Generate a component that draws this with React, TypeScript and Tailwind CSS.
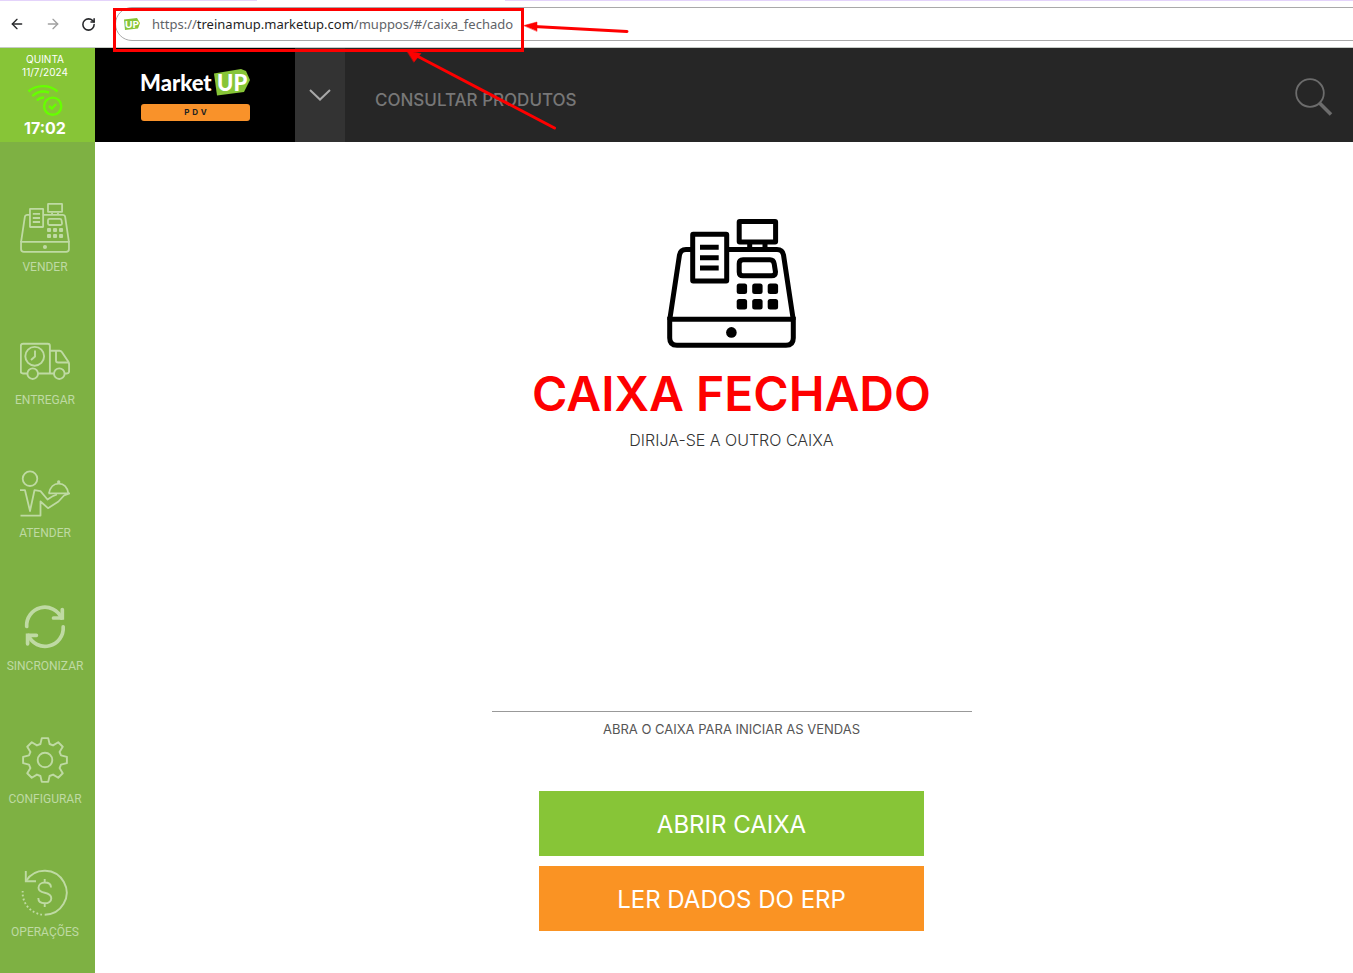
import React from 'react';
import { ArrowLeft, ArrowRight, RotateCw } from 'lucide-react';

interface IconProps {
  className?: string;
  stroke?: number;
}

function RegisterIcon({ className, stroke = 5 }: IconProps) {
  return (
    <svg viewBox="0 0 129 129" className={className} fill="none" stroke="currentColor" strokeWidth={stroke}>
      <path d="M2.7 101 12.5 36Q13.5 30.5 19 30.5H26M61 30.5H110Q115.5 30.5 116.5 36L126.3 101" />
      <path d="M2.7 100.3H126.3V119q0 7.3-7.3 7.3H10q-7.3 0-7.3-7.3Z" />
      <rect x="25.7" y="15.3" width="34" height="46.6" rx="0.5" />
      <path d="M33 28.2H51.7M33 38.7H51.7M33 49H51.7" />
      <rect x="72.2" y="2.5" width="36.4" height="20.4" rx="0.5" />
      <path d="M82.7 25V30M98 25V30" />
      <path d="M76 40.8H103q3.6 0 4.2 4L108.5 53q0 3.8-4 3.8H76q-3.8 0-3.8-3.8V44.8q0-4 3.8-4Z" />
      <g fill="currentColor" stroke="none">
        {[69.7, 85.2, 100.7].map((x) => (
          <React.Fragment key={x}>
            <rect x={x} y="64.5" width="10.4" height="10.4" rx="2.5" />
            <rect x={x} y="80" width="10.4" height="10.4" rx="2.5" />
          </React.Fragment>
        ))}
        <circle cx="64.4" cy="113.4" r="5.3" />
      </g>
    </svg>
  );
}

function TruckIcon({ className }: IconProps) {
  return (
    <svg viewBox="0 0 50 50" className={className} fill="none" stroke="currentColor" strokeWidth="1.9">
      <path d="M7.4 37.5H3q-2.2 0-2.2-2.2V10q0-2.2 2.2-2.2H27.7q2.2 0 2.2 2.2V37.5M18 37.5H34M30 14.8H39.5Q41 14.8 42 16.3L48.2 25.5Q49.1 27 49.1 28.5V35.3q0 2.2-2.2 2.2H44.6" />
      <path d="M36 15V24.5q0 2 2 2H49" />
      <circle cx="12.7" cy="37.7" r="5.3" />
      <circle cx="39.3" cy="37.7" r="5.3" />
      <circle cx="14.7" cy="20.3" r="9.4" />
      <path d="M15 14.5V20.5L11 24" />
    </svg>
  );
}

function WaiterIcon({ className }: IconProps) {
  return (
    <svg viewBox="0 0 50 50" className={className} fill="none" stroke="currentColor" strokeWidth="1.8" strokeLinejoin="round">
      <circle cx="10" cy="9.7" r="7.3" />
      <path d="M0 21.2H5L10 42 14.5 21.2 20.5 22.2 27.5 30.5Q33 26.5 37 25.5" />
      <path d="M0.5 46.6H20.5V32.5L28 39.2 38.5 32.5 44 26.5 49.5 24.4H28.5" />
      <path d="M29 24.4C30 18 34 14.6 38.7 14.6S47.3 18 48.3 24.4" />
      <circle cx="38.7" cy="13" r="0.8" />
    </svg>
  );
}

function SyncIcon({ className }: IconProps) {
  return (
    <svg viewBox="0 0 50 50" className={className} fill="none" stroke="currentColor" strokeWidth="3.7" strokeLinecap="round">
      <path d="M6.7 24.5A18.2 18.2 0 0 1 41.5 16M43.2 24.9A18.2 18.2 0 0 1 8.4 33.5" />
      <path d="M42.3 7.5V16H33.5M7.6 41.8V33.3H16.4" />
    </svg>
  );
}

// one tooth, repeated every 45 degrees
const tooth = [[-4.6, -16], [-3.2, -21.9], [3.2, -21.9], [4.6, -16]];
const gearPoints = Array.from({ length: 8 }, (_, i) => {
  const a = (i * Math.PI) / 4;
  return tooth
    .map(([x, y]) => `${25 + x * Math.cos(a) - y * Math.sin(a)},${25 + x * Math.sin(a) + y * Math.cos(a)}`)
    .join(' ');
}).join(' ');

function GearIcon({ className }: IconProps) {
  return (
    <svg viewBox="0 0 50 50" className={className} fill="none" stroke="currentColor" strokeWidth="1.9" strokeLinejoin="round">
      <polygon points={gearPoints} />
      <circle cx="25" cy="25" r="7.3" />
    </svg>
  );
}

function MoneyBackIcon({ className }: IconProps) {
  return (
    <svg viewBox="0 0 50 50" className={className} fill="none" stroke="currentColor" strokeWidth="1.9">
      <path d="M6 13A22 22 0 1 1 24.7 46.7" />
      <path d="M22 46.6A22 22 0 0 1 2.7 23" strokeDasharray="1.8 2.2" />
      <path d="M5.8 3V13.2H16" />
      <path d="M31 19.5C31 16 28 14.5 24.7 14.5S18.5 16.5 18.5 19.7C18.5 23 21 24 24.7 24.8S31.3 27 31.3 30.2 28.5 35.3 24.7 35.3 18.3 33.3 18.3 30M24.7 11V14.5M24.7 35.3V39" />
    </svg>
  );
}

function WifiIcon() {
  return (
    <svg viewBox="0 0 36 34" className="h-[34px] w-9" fill="none" stroke="#66ff00" strokeWidth="2.4">
      <path d="M1.5 8.5C9 1.5 22.5 1.2 30.5 8.5M5.3 13.2C10 8.7 16 7.5 22 9.5M9.8 17.5C11.5 15.5 14 14.5 17 14.5" />
      <circle cx="25.7" cy="23.2" r="8.6" />
      <path d="M22 23 24.8 25.5 29.2 21" />
    </svg>
  );
}

function Logo() {
  return (
    <svg viewBox="0 0 110 30" className="h-[30px] w-[110px]" role="img" aria-label="MarketUP">
      <path d="M74 5.5 101 1 106 3 110 12 104 24 77 27.5Z" fill="#87c537" />
      <g fill="#fff" fontFamily="Lato, sans-serif" fontWeight="900" fontSize="22">
        <text x="0" y="23">Market</text>
        <text x="77" y="23">UP</text>
      </g>
    </svg>
  );
}

const menu = [
  { label: 'VENDER', icon: <RegisterIcon className="size-[50px]" stroke={4.6} /> },
  { label: 'ENTREGAR', icon: <TruckIcon className="size-[50px]" /> },
  { label: 'ATENDER', icon: <WaiterIcon className="size-[50px]" /> },
  { label: 'SINCRONIZAR', icon: <SyncIcon className="size-[50px]" /> },
  { label: 'CONFIGURAR', icon: <GearIcon className="size-[50px]" /> },
  { label: 'OPERAÇÕES', icon: <MoneyBackIcon className="size-[50px]" /> },
];

function BrowserBar() {
  return (
    <div className="flex h-12 flex-col border-b border-[#c6cbc6] bg-white">
      <div className="flex h-px">
        <span className="w-[257px] bg-[#e4d3fb]" />
        <span className="w-[248px]" />
        <span className="flex-1 bg-[#e4d3fb]" />
      </div>
      <div className="flex flex-1 items-center overflow-hidden">
        <div className="flex w-[115px] shrink-0 items-center gap-5 pl-[9px] text-[#27282b]">
          <button type="button" aria-label="Voltar"><ArrowLeft size={16} /></button>
          <button type="button" aria-label="Avançar" className="text-[#a0a0a0]"><ArrowRight size={16} /></button>
          <button type="button" aria-label="Recarregar"><RotateCw size={15} strokeWidth={2.5} /></button>
        </div>
        <div className="-mr-5 flex h-[34px] flex-1 items-center gap-3 rounded-full border border-[#a9a9a9] pl-2">
          <svg viewBox="0 0 16 12" className="h-3 w-4" aria-hidden="true">
            <path d="M0 1.5 13 0 16 5 14 10.5 1 12Z" fill="#87c537" />
            <text x="1" y="10" fill="#fff" fontFamily="Lato, sans-serif" fontWeight="900" fontSize="10">UP</text>
          </svg>
          <div role="textbox" aria-label="Endereço" className="pt-0.5 font-['Noto_Sans',sans-serif] text-[13px] text-[#5f6368]">
            https://<span className="text-[#1f1f1f]">treinamup.marketup.com</span>/muppos/#/caixa_fechado
          </div>
        </div>
      </div>
    </div>
  );
}

function Annotations() {
  return (
    <div className="pointer-events-none absolute inset-x-0 top-0" aria-hidden="true">
      <div className="absolute top-2 left-[113px] h-11 w-[411px] border-3 border-[#fe0000]" />
      <svg viewBox="0 0 260 120" className="absolute top-4 left-[400px] h-[120px] w-[260px]" fill="#fe0000" stroke="#fe0000" strokeWidth="3" strokeLinecap="round">
        <path d="M134 10.5 227 15.5M18 40.5 154.5 112" />
        <path d="M124 9.5 137 6V15ZM7 35 21 37.5 14 46Z" strokeWidth="0.5" />
      </svg>
    </div>
  );
}

export default function App() {
  return (
    <div className="relative flex min-h-screen flex-col bg-white font-[Inter,sans-serif]">
      <BrowserBar />

      <div className="flex flex-1">
        <aside className="flex w-[95px] shrink-0 flex-col bg-[#7eb143]">
          <div className="flex h-[94px] flex-col items-center bg-[#87c537] pt-[5px] pr-[5px] text-white">
            <span className="text-[10px] leading-[13px]">QUINTA</span>
            <span className="text-[10px] leading-[13px]">11/7/2024</span>
            <div className="mt-1"><WifiIcon /></div>
            <span className="text-base leading-[22px] font-bold">17:02</span>
          </div>
          <nav className="flex flex-1 flex-col pt-[30px] pr-[5px] pb-0.5">
            {menu.map((item) => (
              <button
                key={item.label}
                type="button"
                className="flex flex-1 flex-col items-center justify-center gap-1.5 text-[#bfdaa3]"
              >
                {item.icon}
                <span className="font-[Roboto,sans-serif] text-xs">{item.label}</span>
              </button>
            ))}
          </nav>
        </aside>

        <div className="flex flex-1 flex-col">
          <header className="flex h-[94px] bg-[#262626]">
            <div className="flex w-[200px] flex-col items-center gap-1.5 bg-black pt-5">
              <Logo />
              <span className="w-[109px] rounded-[3px] bg-[#f9922a] pl-1 text-center text-[8px] leading-[17px] font-bold tracking-[3px] text-[#222222]">
                PDV
              </span>
            </div>
            <button type="button" aria-label="Mais opções" className="flex w-[50px] items-center justify-center bg-[#333333]">
              <svg viewBox="0 0 22 12" className="h-3 w-[22px]" fill="none" stroke="#a8a8a8" strokeWidth="2">
                <path d="M1 1 11 10.5 21 1" />
              </svg>
            </button>
            <input
              type="text"
              aria-label="Consultar produtos"
              placeholder="CONSULTAR PRODUTOS"
              className="min-w-0 flex-1 bg-transparent pt-3 pl-[30px] text-[17px] font-medium text-white outline-none placeholder:text-[#777777]"
            />
            <button type="button" aria-label="Buscar" className="px-5 pt-1">
              <svg viewBox="0 0 38 38" className="size-[38px]" fill="none" stroke="#6c6c6c">
                <circle cx="15" cy="15" r="13.8" strokeWidth="1.8" />
                <path d="M24.5 25 36 36.5" strokeWidth="3.5" />
              </svg>
            </button>
          </header>

          <main className="flex flex-1 flex-col items-center justify-between gap-10 pt-[77px] pb-[42px] pl-[15px] text-[#333333]">
            <section className="flex flex-col items-center">
              <RegisterIcon className="size-[129px] text-black" />
              <h1 className="mt-4 text-5xl leading-[60px] font-semibold text-[#fe0000]">CAIXA FECHADO</h1>
              <p className="mt-1 text-base leading-6 font-light">DIRIJA-SE A OUTRO CAIXA</p>
            </section>

            <section className="flex w-[480px] flex-col items-center border-t border-[#999999] pt-[7px]">
              <p className="text-[13px] leading-5 text-[#555555]">ABRA O CAIXA PARA INICIAR AS VENDAS</p>
              <button type="button" className="mt-[52px] h-[65px] w-[385px] bg-[#87c537] pt-0.5 text-2xl text-white">ABRIR CAIXA</button>
              <button type="button" className="mt-2.5 h-[65px] w-[385px] bg-[#fa9323] pt-0.5 text-2xl text-white">LER DADOS DO ERP</button>
            </section>
          </main>
        </div>
      </div>

      <Annotations />
    </div>
  );
}
